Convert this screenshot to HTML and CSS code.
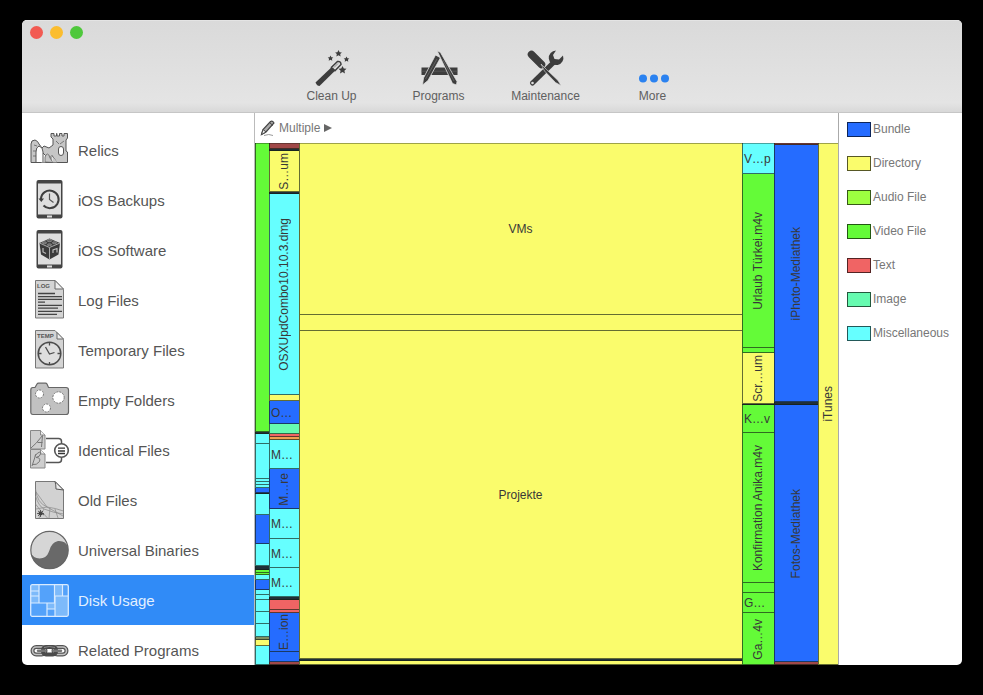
FILE: index.html
```html
<!DOCTYPE html>
<html lang="en">
<head>
<meta charset="utf-8">
<title>Disk Usage</title>
<link rel="stylesheet" href="styles.css">
</head>
<body>
<div class="window">
  <header class="titlebar">
    <div class="lights"><span class="light close"></span><span class="light minimize"></span><span class="light zoom"></span></div>
    <nav class="tools">
      <button class="tool" type="button">
        <svg width="40" height="38" viewBox="0 0 40 38" fill="#3d3d3d"><path d="M3.500 33.500L19.500 18.200L23 21.700L7.500 37Q5 37 3.500 33.500Z"/><path d="M19.500 18.200L25.500 12.500Q29 12 29 15.500L23 21.700Z" fill="#ddd" stroke="#3d3d3d" stroke-width="1.500"/><path d="M22 18.500l4-4" stroke="#888"/><path d="M26.500 1l1.100 2.200 2.300.3-1.700 1.600.4 2.400-2.100-1.200-2.100 1.200.4-2.400-1.700-1.600 2.300-.3zM18.500 6.500l.9 1.800 1.900.2-1.400 1.300.4 2-1.800-1-1.800 1 .4-2-1.400-1.300 1.900-.2zM34.500 7.500l.9 1.800 1.900.2-1.400 1.300.4 2-1.800-1-1.800 1 .4-2-1.400-1.300 1.900-.2zM30.500 17l1.300 2.500 2.700.3-2.100 1.900.6 2.800-2.500-1.400-2.500 1.400.6-2.800-2.100-1.900 2.700-.3z"/></svg>
        <span>Clean Up</span>
      </button>
      <button class="tool" type="button">
        <svg width="40" height="38" viewBox="0 0 40 38"><path d="M2.500 18.500h36v7.500h-36z" fill="#3d3d3d"/><path d="M2.500 22.200h36" stroke="#666" stroke-width=".6"/><path d="M16.500 6l5 2.700L9 31.500 3.500 36l1-7z" fill="#3d3d3d" stroke="#e2e2e2" stroke-width=".8"/><path d="M18 1.500l3.500 2L38 32.500l-.5 3.500-4-1.500z" fill="#3d3d3d" stroke="#e2e2e2" stroke-width=".8"/><path d="M24 11l11 21M18 10L6.500 30" stroke="#777" stroke-width=".6"/></svg>
        <span>Programs</span>
      </button>
      <button class="tool" type="button">
        <svg width="40" height="38" viewBox="0 0 40 38"><path d="M6.500 34L27 14" stroke="#3d3d3d" stroke-width="5" stroke-linecap="round"/><path d="M37 6.500a7.300 7.300 0 1 1-7-5l-3 4.500 1.500 4 4.500.5z" fill="#3d3d3d"/><circle cx="6.500" cy="34" r="1.300" fill="#e0e0e0"/><path d="M5 5L17 17.500" stroke="#e2e2e2" stroke-width="8.500"/><path d="M5.500 5.500L15.500 15.500" stroke="#3d3d3d" stroke-width="7.500" stroke-linecap="round"/><path d="M15 15l5.500 5.500L32 31.500l3 5-5.500-3L18.500 22z" fill="#3d3d3d" stroke="#e2e2e2" stroke-width=".6"/></svg>
        <span>Maintenance</span>
      </button>
      <button class="tool" type="button">
        <svg width="40" height="38" viewBox="0 0 40 38" fill="#2b82f0"><circle cx="10" cy="29.500" r="4"/><circle cx="21" cy="29.500" r="4"/><circle cx="32" cy="29.500" r="4"/></svg>
        <span>More</span>
      </button>
    </nav>
  </header>
  <div class="content">
    <nav class="sidebar">
      <a class="item" href="#relics">
        <svg width="40" height="40" viewBox="0 0 40 40" fill="#c6c6c6" stroke="#555"><path d="M1 32.500V14q0-4 4-4 3 1 4 4l3 4 2-2 5 2 4-3V9l-2-2V3.500h3V6h2.500V3.500H27V6h2.500V3.500H32V6h2V3.500h3.500V8l-1.500 2v11l1.500 1v10.500H27l-5-7-1 1v6h-5V26l-3-3-2 3v6.500z"/><path d="M6 32V22q0-5 3-6 4 1 4 6v10" fill="#fff"/><path d="M15 32v-5q1-3 2.500-3t2.500 4l3 4.500z" fill="#c6c6c6" stroke="#777"/><path d="M22.500 32.500h5l-5-6z" stroke="none"/><rect x="28.500" y="16.500" width="5" height="9" rx="2.500" fill="#fff"/><path d="M26 11l3 3M34 11l-4 3M4 15l3 1M3 21h3M3 26h3M1 32.500h36" stroke-width=".7"/></svg>
        <span>Relics</span></a>
      <a class="item" href="#backups">
        <svg width="40" height="40" viewBox="0 0 40 40"><rect x="6.500" y="0" width="26" height="38.500" rx="2" fill="#444"/><rect x="8" y="3.500" width="23" height="31" fill="#dedede"/><path d="M17 36.500h5" stroke="#ddd" stroke-width="2"/><path d="M11 19a8.800 8.800 0 1 1 2.500 6.500" fill="none" stroke="#3f3f3f" stroke-width="2"/><path d="M8.500 18.500h5.500L11.300 22z" fill="#3f3f3f"/><path d="M19.500 13.500v6l4 3" fill="none" stroke="#555" stroke-width="1.200"/></svg>
        <span>iOS Backups</span></a>
      <a class="item" href="#software">
        <svg width="40" height="40" viewBox="0 0 40 40"><rect x="6.500" y="0" width="26" height="38.500" rx="2" fill="#444"/><rect x="8" y="3.500" width="23" height="31" fill="#dedede"/><path d="M17 36.500h5" stroke="#ddd" stroke-width="2"/><path d="M9.500 13l10-4.500 10.500 4.500-1.500 11.500-9 5-8.500-5z" fill="#3a3a3a"/><path d="M9.500 13l10 4.500L30 13M19.500 17.500v12" fill="none" stroke="#aaa"/><g fill="#666" stroke="#999" stroke-width=".7"><ellipse cx="19.500" cy="10.500" rx="2.500" ry="1.200"/><ellipse cx="14.500" cy="12.800" rx="2.200" ry="1"/><ellipse cx="24.500" cy="12.800" rx="2.200" ry="1"/><ellipse cx="19.500" cy="14.800" rx="2.200" ry="1"/></g><path d="M13 18v4l3 1.500M23 23v-3l4-1.500v4" fill="none" stroke="#bbb" stroke-width="1.200"/></svg>
        <span>iOS Software</span></a>
      <a class="item" href="#logs">
        <svg width="40" height="40" viewBox="0 0 40 40"><path d="M5.500.5H25l8.500 9v28.500h-28z" fill="#d4d4d4" stroke="#777"/><path d="M25 .5v8.500h8.500z" fill="#eee" stroke="#666"/><text class="doc-tag" x="7" y="8">LOG</text><path d="M8 13.500h17M8 16.700h24M8 19.400h24M8 22.200h7M8 25.300h24M8 28.200h20M8 31.400h24M8 34.300h19" stroke="#444" stroke-width="1.300"/></svg>
        <span>Log Files</span></a>
      <a class="item" href="#temporary">
        <svg width="40" height="40" viewBox="0 0 40 40"><path d="M5.500.5H25l8.500 9v28.500h-28z" fill="#d4d4d4" stroke="#777"/><path d="M27 2.500v6.500h6.500z" fill="#eee" stroke="#666"/><text class="doc-tag" x="7" y="8">TEMP</text><circle cx="19.500" cy="23.500" r="11.300" fill="#dedede" stroke="#4b4b4b" stroke-width="1.500"/><path d="M19.500 12.500v3M19.500 32v3M8.500 23.500h3M27.500 23.500h3M15.500 17l4 7 5-1.500" fill="none" stroke="#4b4b4b" stroke-width="1.300"/></svg>
        <span>Temporary Files</span></a>
      <a class="item" href="#folders">
        <svg width="40" height="40" viewBox="0 0 40 40"><path d="M.8 10q0-2.500 2-2.500H5l2-3.500q.5-.8 1.500-.8h7q1 0 1.500.8l1.500 3.500H36q2.500 0 2.500 2.500v22q0 2.500-2.500 2.500H3q-2.200 0-2.200-2.500z" fill="#c1c1c1" stroke="#666" stroke-width="1.200"/><g fill="#fff" stroke="#777" stroke-dasharray="2 1"><circle cx="9.500" cy="14" r="4"/><circle cx="28.500" cy="17.500" r="5.700"/><circle cx="16.500" cy="28" r="4"/></g></svg>
        <span>Empty Folders</span></a>
      <a class="item" href="#identical">
        <svg width="40" height="40" viewBox="0 0 40 40"><path d="M.5.500h10l4.500 4.500v14H.5zM.5 19.500h10L15 24v14H.5z" fill="#cecece" stroke="#888"/><path d="M10.500.5V5H15M10.500 19.500V24H15" fill="#eee" stroke="#777" stroke-width=".8"/><path d="M1 18Q6 14 12.500 5.500L11.500 17M7.500 12.500h5M2 36l4-12M4.500 26q6-6 6.500-3-1 4-5 4.500 5 0 3.500 4-3 4-7 3" fill="none" stroke="#777"/><path d="M16 8.500h12.500q3 0 3 3V15M16 32.500h12.500q3 0 3-3V26" fill="none" stroke="#555" stroke-width="1.500"/><circle cx="31.500" cy="20.500" r="6.800" fill="#fff" stroke="#555" stroke-width="1.600"/><path d="M28 18.200h7M28 21h7M28 23.500h7" stroke="#333" stroke-width="1.300"/></svg>
        <span>Identical Files</span></a>
      <a class="item" href="#old">
        <svg width="40" height="40" viewBox="0 0 40 40"><path d="M5.500 1.500H25l8.500 8.500v28.500h-28z" fill="#d2d2d2" stroke="#777"/><path d="M25 1.500q1 3 1 7.500l7.500 1z" fill="#eee" stroke="#555"/><path d="M5.500 9Q7 23 17 27q8 1 16.500 4M5.500 16q3 10 8.500 13 10 4 19.500 5M5.500 24q5 7 12 14M6 12l11 15 16 9M6 29l11-2M14 29l-5 9M20 28l-1 10M25 29l3 9" fill="none" stroke="#888" stroke-width=".7"/><path d="M8 31l6 4M13 31l-5 5M10.500 30v7M7 33.500h7" stroke="#444" stroke-width=".8"/><circle cx="10.500" cy="33.500" r="2" fill="#444"/></svg>
        <span>Old Files</span></a>
      <a class="item" href="#universal">
        <svg width="40" height="40" viewBox="0 0 40 40"><circle cx="19.500" cy="20" r="18.700" fill="#d6d6d6"/><path d="M38.200 20A18.700 18.700 0 0 1 1 23q2 5 8.500 5.500 7 0 9.500-7 2-9 9-10.500 8-.5 10 6z" fill="#696969"/><circle cx="19.500" cy="20" r="18.700" fill="none" stroke="#666" stroke-width="1.200"/></svg>
        <span>Universal Binaries</span></a>
      <a class="item selected" href="#usage" aria-current="page">
        <svg width="40" height="40" viewBox="0 0 40 40"><rect x=".7" y="4.700" width="37.600" height="31.600" rx="1.500" fill="#7dbafa"/><path d="M9 5h15v18H17H9zM1 23h16v13H1zM17 29h8v7h-8zM33 5h5v11h-5z" fill="#54a2fa"/><path d="M9 5v18M24.500 5v18M.5 11h8.500M.5 16h8.500M.5 23h24M17 23v13M17 29h8M25 16h13M32.500 5v11M25 16v20" fill="none" stroke="#d9ebff" stroke-width="1.200"/><rect x=".7" y="4.700" width="37.600" height="31.600" rx="1.500" fill="none" stroke="#d9ebff" stroke-width="1.300"/></svg>
        <span>Disk Usage</span></a>
      <a class="item" href="#related">
        <svg width="40" height="40" viewBox="0 0 40 40" fill="none"><g stroke="#555" stroke-width="4"><rect x="2.500" y="17" width="13" height="7.500" rx="3.700"/><rect x="23.500" y="17" width="13" height="7.500" rx="3.700"/></g><g stroke="#c2c2c2" stroke-width="1.600"><rect x="2.500" y="17" width="13" height="7.500" rx="3.700"/><rect x="23.500" y="17" width="13" height="7.500" rx="3.700"/></g><rect x="13" y="17" width="13" height="7.500" rx="3" stroke="#4b4b4b" stroke-width="4"/><path d="M8 20.700h7M24 20.700h7" stroke="#777" stroke-width="2.500" stroke-linecap="round"/><path d="M14 17.500q5-2 11 0" stroke="#888"/></svg>
        <span>Related Programs</span></a>
    </nav>
    <main class="main">
      <div class="path">
        <svg width="16" height="17" viewBox="0 0 16 17"><path d="M1.500 14.500l1.500-5L10.500 1.500q2-1 3.500 1.500L6 12z" fill="#aaa" stroke="#444" stroke-width="1.200"/><path d="M9.500 2.500l3.500 3M1.500 14.500l1.500-5L6 12z" fill="#eee" stroke="#444"/><path d="M4 15.500q5-2 9 0" fill="none" stroke="#999"/></svg>
        <button class="crumb" type="button">Multiple <svg width="8" height="8" viewBox="0 0 8 8"><path d="M0 0l8 4-8 4z" fill="#666"/></svg></button>
      </div>
      <div class="map">
        <div class="col" style="flex-grow:14">
          <div class="cell video" style="flex-grow:289"></div>
          <div class="cell dark" style="flex-grow:2"></div>
          <div class="cell misc" style="flex-grow:10"></div>
          <div class="cell misc" style="flex-grow:35"></div>
          <div class="cell misc" style="flex-grow:3"></div>
          <div class="cell misc" style="flex-grow:3"></div>
          <div class="cell misc" style="flex-grow:3"></div>
          <div class="cell bundle" style="flex-grow:5"></div>
          <div class="cell dark" style="flex-grow:1"></div>
          <div class="cell misc" style="flex-grow:21"></div>
          <div class="cell bundle" style="flex-grow:29"></div>
          <div class="cell misc" style="flex-grow:22"></div>
          <div class="cell dark" style="flex-grow:4"></div>
          <div class="cell video" style="flex-grow:3"></div>
          <div class="cell video" style="flex-grow:2"></div>
          <div class="cell misc" style="flex-grow:5"></div>
          <div class="cell bundle" style="flex-grow:10"></div>
          <div class="cell misc" style="flex-grow:5"></div>
          <div class="cell misc" style="flex-grow:5"></div>
          <div class="cell misc" style="flex-grow:12"></div>
          <div class="cell misc" style="flex-grow:12"></div>
          <div class="cell misc" style="flex-grow:13"></div>
          <div class="cell olive" style="flex-grow:3"></div>
          <div class="cell directory" style="flex-grow:6"></div>
          <div class="cell misc" style="flex-grow:19"></div>
        </div>
        <div class="col" style="flex-grow:30">
          <div class="cell brown" style="flex-grow:6"></div>
          <div class="cell dark" style="flex-grow:2"></div>
          <div class="cell directory" style="flex-grow:41"><span class="turned">S…um</span></div>
          <div class="cell dark" style="flex-grow:2"></div>
          <div class="cell misc" style="flex-grow:201"><span class="turned">OSXUpdCombo10.10.3.dmg</span></div>
          <div class="cell directory" style="flex-grow:6"></div>
          <div class="cell bundle start" style="flex-grow:23"><span>O…</span></div>
          <div class="cell image" style="flex-grow:10"></div>
          <div class="cell text" style="flex-grow:3"></div>
          <div class="cell orange" style="flex-grow:3"></div>
          <div class="cell misc start" style="flex-grow:29"><span>M…</span></div>
          <div class="cell bundle" style="flex-grow:40"><span class="turned">M…re</span></div>
          <div class="cell misc start" style="flex-grow:30"><span>M…</span></div>
          <div class="cell misc start" style="flex-grow:29"><span>M…</span></div>
          <div class="cell misc start" style="flex-grow:29"><span>M…</span></div>
          <div class="cell dark" style="flex-grow:3"></div>
          <div class="cell text" style="flex-grow:10"></div>
          <div class="cell text" style="flex-grow:3"></div>
          <div class="cell bundle" style="flex-grow:39"><span class="turned">E…ion</span></div>
          <div class="cell bundle" style="flex-grow:10"></div>
          <div class="cell brown" style="flex-grow:3"></div>
        </div>
        <div class="col" style="flex-grow:443">
          <div class="cell directory" style="flex-grow:172"><span>VMs</span></div>
          <div class="cell directory" style="flex-grow:16"></div>
          <div class="cell directory" style="flex-grow:328"><span>Projekte</span></div>
          <div class="cell dark" style="flex-grow:2"></div>
          <div class="cell directory" style="flex-grow:4"></div>
        </div>
        <div class="col" style="flex-grow:32">
          <div class="cell misc start" style="flex-grow:31"><span>V…p</span></div>
          <div class="cell video" style="flex-grow:174"><span class="turned">Urlaub Türkei.m4v</span></div>
          <div class="cell video" style="flex-grow:5"></div>
          <div class="cell directory" style="flex-grow:51"><span class="turned">Scr…um</span></div>
          <div class="cell dark" style="flex-grow:1"></div>
          <div class="cell video start" style="flex-grow:28"><span>K…v</span></div>
          <div class="cell video" style="flex-grow:150"><span class="turned">Konfirmation Anika.m4v</span></div>
          <div class="cell video" style="flex-grow:10"></div>
          <div class="cell video start" style="flex-grow:20"><span>G…</span></div>
          <div class="cell video" style="flex-grow:52"><span class="turned">Ga…4v</span></div>
        </div>
        <div class="col" style="flex-grow:44">
          <div class="cell brown" style="flex-grow:2"></div>
          <div class="cell bundle" style="flex-grow:257"><span class="turned">iPhoto-Mediathek</span></div>
          <div class="cell dark" style="flex-grow:3"></div>
          <div class="cell bundle" style="flex-grow:257"><span class="turned">Fotos-Mediathek</span></div>
          <div class="cell brown" style="flex-grow:3"></div>
        </div>
        <div class="col" style="flex-grow:20">
          <div class="cell directory" style="flex-grow:522"><span class="turned">iTunes</span></div>
        </div>
      </div>
    </main>
    <aside>
      <ul class="legend">
        <li><span class="swatch bundle"></span>Bundle</li>
        <li><span class="swatch directory"></span>Directory</li>
        <li><span class="swatch audio"></span>Audio File</li>
        <li><span class="swatch video"></span>Video File</li>
        <li><span class="swatch text"></span>Text</li>
        <li><span class="swatch image"></span>Image</li>
        <li><span class="swatch misc"></span>Miscellaneous</li>
      </ul>
    </aside>
  </div>
</div>
</body>
</html>
```
FILE: styles.css
```css
* { box-sizing: border-box; }

body {
  margin: 0;
  padding: 20px 21px 30px 22px;
  height: 100vh;
  background: #000;
  font-family: "Liberation Sans", Arial, sans-serif;
  font-size: 12px;
}

.window {
  display: flex;
  flex-direction: column;
  height: 100%;
  border-radius: 5px;
  overflow: hidden;
  background: #fff;
}

.titlebar {
  flex: none;
  padding-bottom: 9px;
  background: linear-gradient(#dadada, #e4e4e4 90%, #d8d8d8);
  border-top: 1px solid #e4e4e4;
  border-bottom: 1px solid #c6c6c6;
}

.lights {
  display: flex;
  gap: 7px;
  padding: 5px 8px 10px;
}

.light {
  width: 13px;
  height: 13px;
  border-radius: 50%;
}

.close { background: #f25a52; }
.minimize { background: #fbbd2e; }
.zoom { background: #4fc83c; }

.tools {
  display: flex;
  justify-content: center;
}

.tool {
  display: flex;
  flex-direction: column;
  align-items: center;
  gap: 2px;
  width: 107px;
  padding: 0;
  border: 0;
  background: none;
  font: inherit;
  line-height: 14px;
  color: #606060;
}

.content {
  display: flex;
  flex: 1;
  min-height: 0;
}

.sidebar {
  flex: none;
  width: 233px;
  padding-top: 12px;
  overflow: hidden;
  border-right: 1px solid #bbb;
}

.item {
  display: flex;
  align-items: center;
  gap: 8px;
  height: 50px;
  padding-left: 8px;
  font-size: 15px;
  color: #555;
  text-decoration: none;
}

.item svg { overflow: visible; }

.selected {
  background: #308bf7;
  color: #e2f0ff;
}

.doc-tag {
  font-size: 6px;
  font-weight: bold;
  fill: #555;
}

.main {
  display: flex;
  flex: 1;
  flex-direction: column;
  min-width: 0;
  border-right: 1px solid #aaa;
}

.path {
  display: flex;
  flex: none;
  align-items: center;
  gap: 3px;
  height: 30px;
  padding-left: 5px;
}

.crumb {
  padding: 0;
  border: 0;
  background: none;
  font: inherit;
  line-height: 14px;
  color: #777;
}

.map {
  display: flex;
  flex: 1;
  min-height: 0;
  color: #383838;
}

.col {
  display: flex;
  flex: 1 1 0;
  flex-direction: column;
  min-width: 0;
}

.cell {
  display: flex;
  flex: 1 1 0;
  align-items: center;
  justify-content: center;
  min-height: 0;
  overflow: hidden;
  box-shadow: inset 1px -1px 0 rgba(20, 30, 20, 0.65);
  white-space: nowrap;
}

.cell:first-child {
  box-shadow: inset 1px -1px 0 rgba(20, 30, 20, 0.65), inset 0 1px 0 rgba(20, 30, 20, 0.4);
}

.start {
  justify-content: flex-start;
  padding-left: 2px;
}

.turned {
  writing-mode: vertical-rl;
  transform: rotate(180deg);
}

.bundle { background: #256cff; }
.directory { background: #fafc6c; }
.audio { background: #9dff40; }
.video { background: #64fb38; }
.text { background: #f06464; }
.image { background: #66fbb0; }
.misc { background: #66ffff; }
.orange { background: #f0a050; }
.olive { background: #7f9060; }
.brown { background: #a04848; }
.dark { background: #203038; }

.legend {
  display: flex;
  flex-direction: column;
  gap: 18px;
  width: 123px;
  margin: 0;
  padding: 8px 0 0 8px;
  list-style: none;
  color: #777;
}

.legend li {
  display: flex;
  align-items: center;
  gap: 2px;
  height: 16px;
}

.swatch {
  width: 24px;
  height: 15px;
  border: 1px solid rgba(0, 0, 0, 0.65);
}
```
